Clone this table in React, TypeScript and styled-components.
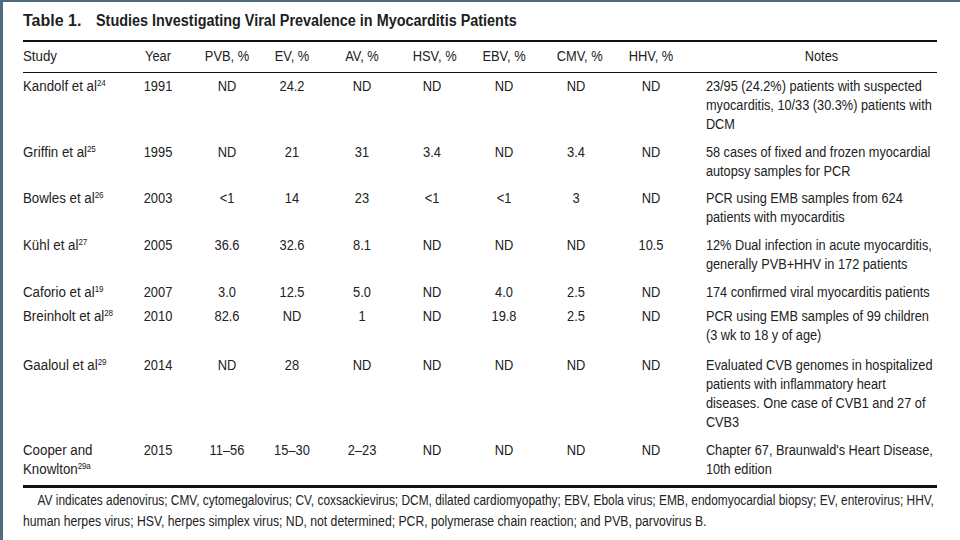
import React from "react";
import styled, { createGlobalStyle } from "styled-components";

interface StudyRow {
  study: string[];
  sup: string;
  year: string;
  values: string[];
  notes: string[];
  padBottom?: number;
}

const rows: StudyRow[] = [
  {
    study: ["Kandolf et al"],
    sup: "24",
    year: "1991",
    values: ["ND", "24.2", "ND", "ND", "ND", "ND", "ND"],
    notes: [
      "23/95 (24.2%) patients with suspected",
      "myocarditis, 10/33 (30.3%) patients with",
      "DCM",
    ],
  },
  {
    study: ["Griffin et al"],
    sup: "25",
    year: "1995",
    values: ["ND", "21", "31", "3.4", "ND", "3.4", "ND"],
    notes: ["58 cases of fixed and frozen myocardial", "autopsy samples for PCR"],
    padBottom: 4,
  },
  {
    study: ["Bowles et al"],
    sup: "26",
    year: "2003",
    values: ["<1", "14", "23", "<1", "<1", "3", "ND"],
    notes: ["PCR using EMB samples from 624", "patients with myocarditis"],
  },
  {
    study: ["Kühl et al"],
    sup: "27",
    year: "2005",
    values: ["36.6", "32.6", "8.1", "ND", "ND", "ND", "10.5"],
    notes: [
      "12% Dual infection in acute myocarditis,",
      "generally PVB+HHV in 172 patients",
    ],
  },
  {
    study: ["Caforio et al"],
    sup: "19",
    year: "2007",
    values: ["3.0", "12.5", "5.0", "ND", "4.0", "2.5", "ND"],
    notes: ["174 confirmed viral myocarditis patients"],
    padBottom: 1,
  },
  {
    study: ["Breinholt et al"],
    sup: "28",
    year: "2010",
    values: ["82.6", "ND", "1", "ND", "19.8", "2.5", "ND"],
    notes: ["PCR using EMB samples of 99 children", "(3 wk to 18 y of age)"],
    padBottom: 7,
  },
  {
    study: ["Gaaloul et al"],
    sup: "29",
    year: "2014",
    values: ["ND", "28", "ND", "ND", "ND", "ND", "ND"],
    notes: [
      "Evaluated CVB genomes in hospitalized",
      "patients with inflammatory heart",
      "diseases. One case of CVB1 and 27 of",
      "CVB3",
    ],
  },
  {
    study: ["Cooper and", "Knowlton"],
    sup: "29a",
    year: "2015",
    values: ["11–56", "15–30", "2–23", "ND", "ND", "ND", "ND"],
    notes: ["Chapter 67, Braunwald's Heart Disease,", "10th edition"],
    padBottom: 6,
  },
];

const headers = ["PVB, %", "EV, %", "AV, %", "HSV, %", "EBV, %", "CMV, %", "HHV, %"];

const GlobalStyle = createGlobalStyle`
  html, body {
    margin: 0;
    padding: 0;
    background: #ffffff;
  }
  body {
    font-family: "Liberation Sans", Arial, sans-serif;
    color: #222222;
  }
`;

const Frame = styled.div`
  box-sizing: border-box;
  width: 960px;
  height: 540px;
  border-left: 3px solid #4f6b80;
  border-top: 2px solid #4f6b80;
  padding: 9px 23px 0 20px;
  overflow: hidden;
`;

const Title = styled.div`
  font-size: 16px;
  font-weight: bold;
  line-height: 20px;
  color: #1e1e1e;
  display: flex;
  gap: 15px;
  margin-bottom: 9px;
  white-space: nowrap;
`;

const TitleText = styled.span`
  display: inline-block;
  transform: scaleX(0.9);
  transform-origin: left center;
`;

const Table = styled.div`
  border-top: 2px solid #111;
  border-bottom: 3px solid #111;
`;

const Row = styled.div<{ $head?: boolean; $padBottom?: number }>`
  display: grid;
  grid-template-columns: 110px 50px 88px 42px 98px 42px 102px 42px 108px 1fr;
  font-size: 14px;
  line-height: 19px;
  padding-top: ${(p) => (p.$head ? 5 : 4)}px;
  padding-bottom: ${(p) => (p.$head ? 6 : p.$padBottom ?? 5)}px;
  border-bottom: ${(p) => (p.$head ? "1px solid #111" : "none")};
`;

const Cell = styled.div<{ $left?: boolean }>`
  text-align: ${(p) => (p.$left ? "left" : "center")};
  white-space: nowrap;
  transform: scaleX(${(p) => (p.$left ? 0.95 : 0.92)});
  transform-origin: ${(p) => (p.$left ? "left" : "center")} center;
`;

const NotesCell = styled.div<{ $head?: boolean }>`
  padding-left: 1px;
  text-align: ${(p) => (p.$head ? "center" : "left")};
  white-space: nowrap;
  transform: scaleX(0.91);
  transform-origin: ${(p) => (p.$head ? "center" : "left")} center;
`;

const Sup = styled.sup`
  font-size: 8.5px;
  line-height: 0;
  vertical-align: 5px;
  letter-spacing: -0.3px;
`;

const Footnote = styled.div`
  padding-top: 2px;
  font-size: 14px;
  line-height: 21px;
  white-space: nowrap;
`;

const FootLine = styled.span<{ $indent?: boolean; $scale: number }>`
  display: block;
  padding-left: ${(p) => (p.$indent ? 17 : 0)}px;
  transform: scaleX(${(p) => p.$scale});
  transform-origin: left center;
`;

const Line = styled.span`
  display: block;
`;

export default function App() {
  return (
    <>
      <GlobalStyle />
      <Frame>
        <Title>
          <span>Table 1.</span>
          <TitleText>Studies Investigating Viral Prevalence in Myocarditis Patients</TitleText>
        </Title>
        <Table>
          <Row $head>
            <Cell $left>Study</Cell>
            <Cell>Year</Cell>
            {headers.map((h) => (
              <Cell key={h}>{h}</Cell>
            ))}
            <NotesCell $head>Notes</NotesCell>
          </Row>
          {rows.map((r) => (
            <Row key={r.year} $padBottom={r.padBottom}>
              <Cell $left>
                {r.study.map((s, i) => (
                  <Line key={s}>
                    {s}
                    {i === r.study.length - 1 && <Sup>{r.sup}</Sup>}
                  </Line>
                ))}
              </Cell>
              <Cell>{r.year}</Cell>
              {r.values.map((v, i) => (
                <Cell key={i}>{v}</Cell>
              ))}
              <NotesCell>
                {r.notes.map((n) => (
                  <Line key={n}>{n}</Line>
                ))}
              </NotesCell>
            </Row>
          ))}
        </Table>
        <Footnote>
          <FootLine $indent $scale={0.85}>
            AV indicates adenovirus; CMV, cytomegalovirus; CV, coxsackievirus; DCM, dilated cardiomyopathy; EBV, Ebola virus; EMB, endomyocardial biopsy; EV, enterovirus; HHV,
          </FootLine>
          <FootLine $scale={0.872}>
            human herpes virus; HSV, herpes simplex virus; ND, not determined; PCR, polymerase chain reaction; and PVB, parvovirus B.
          </FootLine>
        </Footnote>
      </Frame>
    </>
  );
}
